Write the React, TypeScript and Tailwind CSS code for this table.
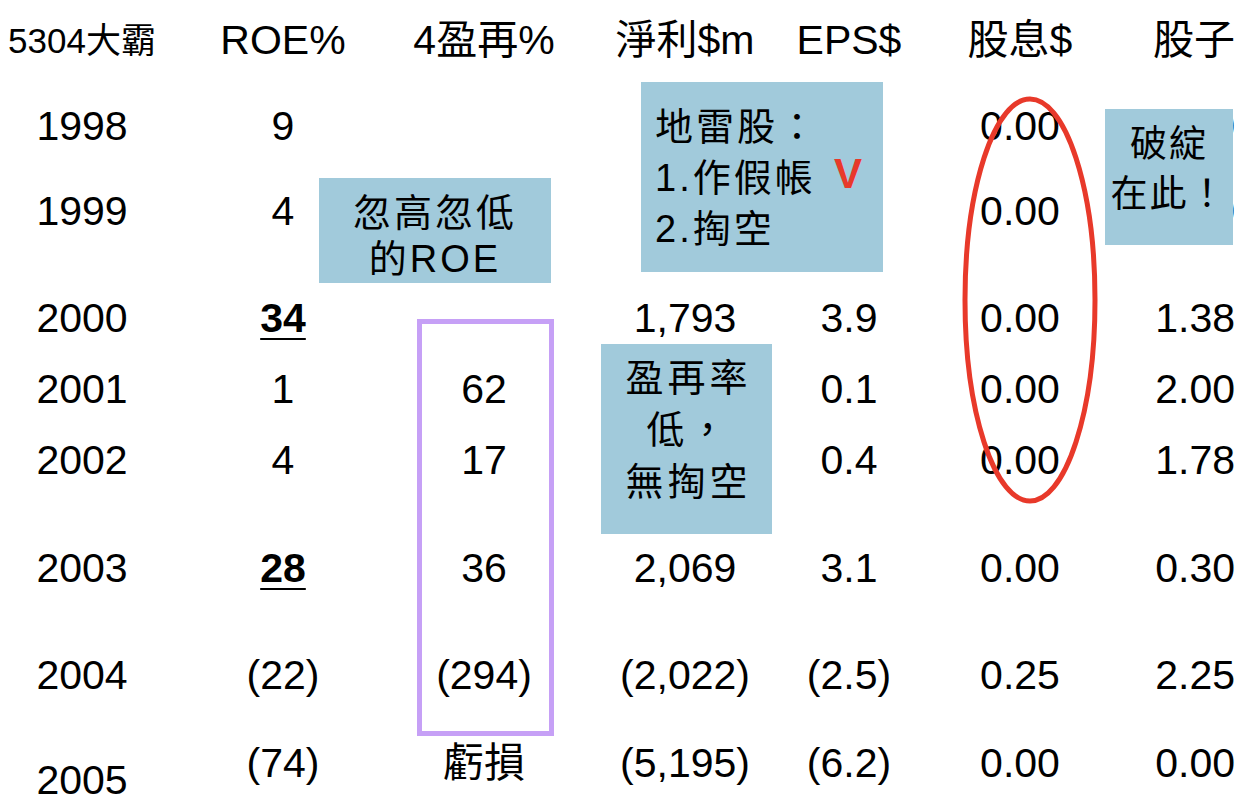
import React from "react"

const font = { fontFamily: '"Liberation Sans", "Noto Sans CJK TC", sans-serif' }

type Cell = string | { text: string; bold?: boolean }

const rows: { year: string; mt: string; cells: Cell[]; yearShift?: boolean }[] = [
  { year: "1998", mt: "mt-[38px]", cells: ["9", "", "", "", "0.00", "0.00"] },
  { year: "1999", mt: "mt-[37px]", cells: ["4", "", "", "", "0.00", "0.00"] },
  { year: "2000", mt: "mt-[59px]", cells: [{ text: "34", bold: true }, "", "1,793", "3.9", "0.00", "1.38"] },
  { year: "2001", mt: "mt-[23px]", cells: ["1", "62", "", "0.1", "0.00", "2.00"] },
  { year: "2002", mt: "mt-[23px]", cells: ["4", "17", "", "0.4", "0.00", "1.78"] },
  { year: "2003", mt: "mt-[60px]", cells: [{ text: "28", bold: true }, "36", "2,069", "3.1", "0.00", "0.30"] },
  { year: "2004", mt: "mt-[59px]", cells: ["(22)", "(294)", "(2,022)", "(2.5)", "0.25", "2.25"] },
  { year: "2005", mt: "mt-[40px]", cells: ["(74)", "虧損", "(5,195)", "(6.2)", "0.00", "0.00"], yearShift: true },
]

const grid = "grid grid-cols-[164px_238px_164px_238px_90px_252px_89px] items-start"
const cell = "flex h-[48px] items-center justify-center whitespace-nowrap leading-none"

function Value({ v }: { v: Cell }) {
  if (typeof v === "string") return <span>{v}</span>
  return <span className={v.bold ? "font-bold underline decoration-2 underline-offset-[6px]" : ""}>{v.text}</span>
}

export default function App() {
  return (
    <div className="relative w-[1256px] h-[808px] overflow-hidden bg-white text-black" style={font}>
      {/* table */}
      <div className="pt-[16px] text-[41px]">
        <div className={grid}>
          <div className={`${cell} text-[35px]`}>5304大霸</div>
          <div className={cell}>ROE%</div>
          <div className={cell}>4盈再%</div>
          <div className={cell}>淨利$m</div>
          <div className={cell}>EPS$</div>
          <div className={cell}>股息$</div>
          <div className={`${cell} !justify-start pl-[7px]`}>股子</div>
        </div>
        {rows.map((r) => (
          <div key={r.year} className={`${grid} ${r.mt}`}>
            <div className={`${cell} ${r.yearShift ? "translate-y-[17px]" : ""}`}>{r.year}</div>
            {r.cells.map((c, i) => (
              <div key={i} className={`${cell} ${i === 5 ? "!justify-end" : ""}`}>
                <Value v={c} />
              </div>
            ))}
          </div>
        ))}
      </div>

      {/* purple frame */}
      <div className="absolute left-[417px] top-[319px] w-[137px] h-[417px] border-[5px] border-[#c6a0f6]" />

      {/* callouts */}
      <div className="absolute left-[319px] top-[178px] w-[232px] h-[105px] bg-[#a1cadb] pt-[12px] text-center text-[38px] leading-[46px] tracking-[3px]">
        <div>忽高忽低</div>
        <div>的ROE</div>
      </div>

      <div className="absolute left-[641px] top-[82px] w-[242px] h-[190px] bg-[#a1cadb] pt-[20px] pl-[14px] text-[38px] leading-[51px] tracking-[3px]">
        <div>地雷股：</div>
        <div>1.作假帳</div>
        <div>2.掏空</div>
      </div>
      <div className="absolute left-[834px] top-[153px] text-[42px] font-bold leading-none text-[#e8392a]">V</div>

      <div className="absolute left-[601px] top-[344px] w-[171px] h-[190px] bg-[#a1cadb] pt-[8px] pl-[4px] text-center text-[38px] leading-[52px] tracking-[4px]">
        <div>盈再率</div>
        <div>低，</div>
        <div>無掏空</div>
      </div>

      <div className="absolute left-[1105px] top-[109px] w-[128px] h-[136px] bg-[#a1cadb] pt-[11px] text-center text-[37px] leading-[50px] tracking-[2px] whitespace-nowrap">
        <div>破綻</div>
        <div>在此！</div>
      </div>

      {/* red ellipse */}
      <svg className="absolute left-[955px] top-[90px]" width="150" height="425" viewBox="0 0 150 425">
        <ellipse cx="75" cy="210" rx="65" ry="201" fill="none" stroke="#e8392a" strokeWidth="5" />
      </svg>
    </div>
  )
}
